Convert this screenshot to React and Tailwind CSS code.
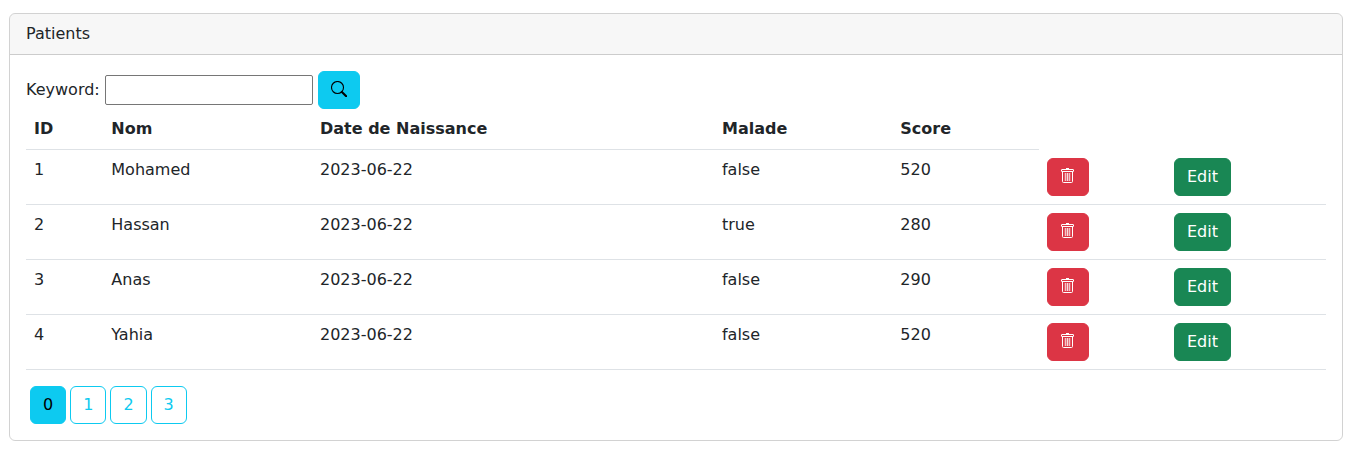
const patients = [
  { id: 1, nom: "Mohamed", date: "2023-06-22", malade: "false", score: 520 },
  { id: 2, nom: "Hassan", date: "2023-06-22", malade: "true", score: 280 },
  { id: 3, nom: "Anas", date: "2023-06-22", malade: "false", score: 290 },
  { id: 4, nom: "Yahia", date: "2023-06-22", malade: "false", score: 520 },
];

const pages = [0, 1, 2, 3];

const button = "inline-flex h-[38px] items-center justify-center rounded-md border px-3";

function SearchIcon() {
  return (
    <svg viewBox="0 0 16 16" fill="none" stroke="currentColor" className="-mt-0.5 size-4">
      <circle cx="6.5" cy="6.5" r="6" strokeWidth="1.1" />
      <path d="M10.9 10.9 15.2 15.2" strokeWidth="2.1" strokeLinecap="round" />
    </svg>
  );
}

function TrashIcon() {
  return (
    <svg viewBox="0 0 16 16" fill="none" stroke="currentColor" className="-mt-0.5 size-4">
      <path d="M6 .5h3" />
      <rect x="1.5" y="1.5" width="12" height="2" rx="0.3" />
      <path d="M2.5 4v9.5a1 1 0 0 0 1 1h8a1 1 0 0 0 1-1V4" />
      <path d="M5 5v8h5V5z" fill="currentColor" stroke="none" opacity="0.3" />
      <path d="M5.25 5v8M7.5 5v8M9.75 5v8" opacity="0.75" />
    </svg>
  );
}

function Row({ patient }) {
  return (
    <tr className="h-[55px] align-top">
      <td className="p-2">{patient.id}</td>
      <td className="p-2">{patient.nom}</td>
      <td className="p-2">{patient.date}</td>
      <td className="p-2">{patient.malade}</td>
      <td className="p-2">{patient.score}</td>
      <td className="p-2">
        <button aria-label="Delete" className={`${button} border-[#dc3545] bg-[#dc3545] align-top text-white`}>
          <TrashIcon />
        </button>
      </td>
      <td className="p-2">
        <a href="#" className={`${button} border-[#198754] bg-[#198754] align-top text-white`}>
          Edit
        </a>
      </td>
    </tr>
  );
}

export default function App() {
  return (
    <div className="bg-white pt-[13px] pr-[7px] pl-[9px] font-['DejaVu_Sans',sans-serif] text-base text-[#212529]">
      <div className="rounded-md border border-black/[0.175]">
        <div className="rounded-t-[5px] border-b border-black/[0.175] bg-black/[0.03] px-4 py-2">Patients</div>
        <div className="p-4">
          <form className="flex h-[38px] items-center">
            <label htmlFor="keyword" className="w-[79px]">Keyword:</label>
            <input
              id="keyword"
              type="text"
              className="h-[30px] w-52 rounded-[2px] border border-[#767676] bg-white px-0.5"
            />
            <button
              type="button"
              aria-label="Search"
              className={`${button} ml-[5px] border-[#0dcaf0] bg-[#0dcaf0] text-black`}
            >
              <SearchIcon />
            </button>
          </form>
          <table className="w-[1300px] table-fixed border-separate border-spacing-0 text-left [&_tbody_td]:border-b [&_tbody_td]:border-[#dee2e6] [&_th]:border-b [&_th]:border-[#dee2e6]">
            <colgroup>
              <col className="w-[77.3px]" />
              <col className="w-[208.7px]" />
              <col className="w-[402px]" />
              <col className="w-[178.3px]" />
              <col className="w-[146.7px]" />
              <col className="w-[127px]" />
              <col className="w-[160px]" />
            </colgroup>
            <thead>
              <tr>
                <th className="p-2">ID</th>
                <th className="p-2">Nom</th>
                <th className="p-2">Date de Naissance</th>
                <th className="p-2">Malade</th>
                <th className="p-2">Score</th>
              </tr>
            </thead>
            <tbody>
              {patients.map((patient) => (
                <Row key={patient.id} patient={patient} />
              ))}
            </tbody>
          </table>
          <ul className="mt-4 flex">
            {pages.map((page) => (
              <li key={page}>
                <a
                  href="#"
                  className={`${button} ml-1 border-[#0dcaf0] align-top ${page === 0 ? "bg-[#0dcaf0] text-black" : "text-[#0dcaf0]"}`}
                >
                  {page}
                </a>
              </li>
            ))}
          </ul>
        </div>
      </div>
    </div>
  );
}
